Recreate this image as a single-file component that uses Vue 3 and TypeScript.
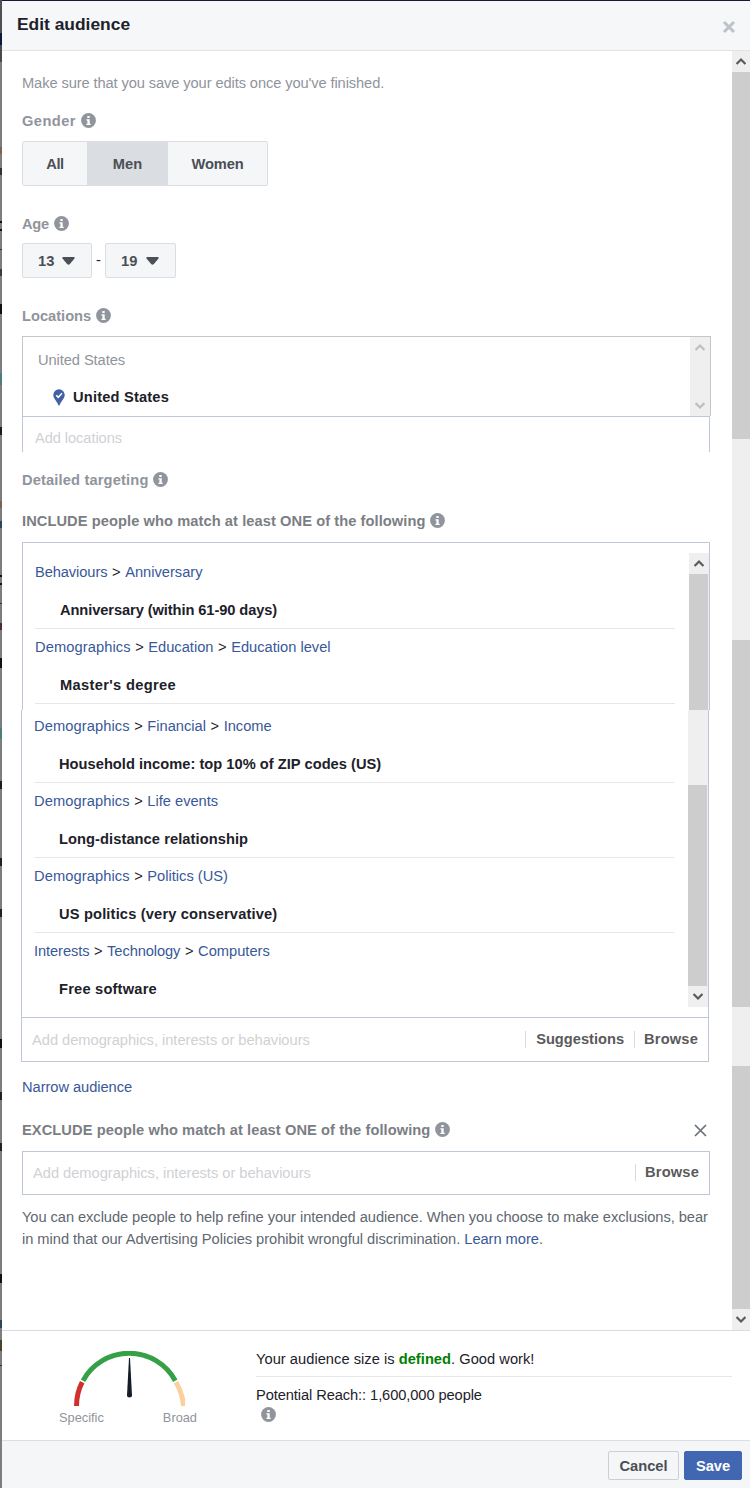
<script setup lang="ts">
import { ref } from 'vue'

interface Target {
  path: string[]
  name: string
  tracking: number
}

const genders: string[] = ['All', 'Men', 'Women']
const gender = ref('Men')
const ages: number[] = [13, 19]

const upperTargets: Target[] = [
  { path: ['Behaviours', 'Anniversary'], name: 'Anniversary (within 61-90 days)', tracking: -0.09 },
  { path: ['Demographics', 'Education', 'Education level'], name: "Master's degree", tracking: 0.33 },
]
const lowerTargets: Target[] = [
  { path: ['Demographics', 'Financial', 'Income'], name: 'Household income: top 10% of ZIP codes (US)', tracking: 0.02 },
  { path: ['Demographics', 'Life events'], name: 'Long-distance relationship', tracking: 0.07 },
  { path: ['Demographics', 'Politics (US)'], name: 'US politics (very conservative)', tracking: 0.16 },
  { path: ['Interests', 'Technology', 'Computers'], name: 'Free software', tracking: 0.2 },
]

const tightWords = ['Behaviours', 'Interests', 'Technology']
const wordClass = (word: string) => ({ tight: tightWords.includes(word), loose: word === 'Demographics' })
</script>

<template>
  <div class="page">
    <svg class="defs" width="0" height="0" aria-hidden="true">
      <symbol id="info" viewBox="0 0 15 15">
        <circle cx="7.5" cy="7.5" r="7.4" fill="#90949c" />
        <path d="M6.3 3h2.400v2H6.300zM5.400 6.200h3.300v4.600h1V12H5.400v-1.200h1V7.400h-1z" fill="#fff" />
      </symbol>
      <symbol id="up" viewBox="0 0 10 7">
        <path d="M.6 6 5 1.600 9.400 6" fill="none" stroke="currentColor" stroke-width="2.100" />
      </symbol>
      <symbol id="down" viewBox="0 0 10 7">
        <path d="M.6 1 5 5.400 9.400 1" fill="none" stroke="currentColor" stroke-width="2.100" />
      </symbol>
    </svg>
    <div class="backdrop"></div>
    <section class="dialog">
      <header class="head">
        <h1>Edit audience</h1>
        <svg class="close" width="14" height="14" viewBox="0 0 14 14"><path d="M2 2l10 10M12 2 2 12" stroke="#bec3c9" stroke-width="3" /></svg>
      </header>
      <main class="body">
        <div class="content">
          <p class="intro">Make sure that you save your edits once you've finished.</p>

          <h2 class="label gender-label"><span>Gender</span><svg class="info"><use href="#info" /></svg></h2>
          <div class="segments">
            <button v-for="g in genders" :key="g" :class="['segment', g.toLowerCase(), { on: g === gender }]" @click="gender = g">{{ g }}</button>
          </div>

          <h2 class="label age-label"><span>Age</span><svg class="info"><use href="#info" /></svg></h2>
          <div class="ages">
            <template v-for="(age, i) in ages" :key="age">
              <span v-if="i" class="dash">-</span>
              <button :class="['age', { wide: i === 1 }]">
                <span>{{ age }}</span>
                <svg width="13" height="8" viewBox="0 0 13 8"><path d="M1.200 0h10.600q1.500.4.5 1.700L7.900 7q-1.400 1.400-2.800 0L.7 1.700Q-.3.4 1.200 0z" fill="#4b4f56" /></svg>
              </button>
            </template>
          </div>

          <h2 class="label loc-label"><span>Locations</span><svg class="info"><use href="#info" /></svg></h2>
          <div class="loc-list">
            <div class="loc-items">
              <p class="loc-country">United States</p>
              <p class="loc-item">
                <svg width="12" height="17" viewBox="0 0 12 17"><path d="M6 .3a5.700 5.700 0 0 1 5.700 5.800C11.700 9.500 8.600 11.500 6.700 16q-.7 1-1.400 0C3.400 11.500.3 9.500.3 6.100A5.700 5.700 0 0 1 6 .3z" fill="#4260a5" /><path d="M3.200 6.200 5.200 8.300 9 4.300" fill="none" stroke="#fff" stroke-width="1.500" /></svg>
                <b>United States</b>
              </p>
            </div>
            <div class="mini-scroll"><svg><use href="#up" /></svg><svg><use href="#down" /></svg></div>
          </div>
          <div class="loc-input">Add locations</div>

          <h2 class="label detail-label"><span>Detailed targeting</span><svg class="info"><use href="#info" /></svg></h2>
          <h2 class="label dark include-label"><span>INCLUDE people who match at least ONE of the following</span><svg class="info"><use href="#info" /></svg></h2>

          <div class="targets upper">
            <ul>
              <li v-for="t in upperTargets" :key="t.name">
                <p class="path"><template v-for="(p, i) in t.path" :key="p"><i v-if="i"> &gt; </i><a :class="wordClass(p)">{{ p }}</a></template></p>
                <p class="name" :style="{ letterSpacing: t.tracking + 'px' }">{{ t.name }}</p>
              </li>
            </ul>
            <div class="list-scroll"><span class="btn"><svg><use href="#up" /></svg></span><span class="thumb"></span></div>
          </div>
          <div class="targets lower">
            <ul>
              <li v-for="t in lowerTargets" :key="t.name">
                <p class="path"><template v-for="(p, i) in t.path" :key="p"><i v-if="i"> &gt; </i><a :class="wordClass(p)">{{ p }}</a></template></p>
                <p class="name" :style="{ letterSpacing: t.tracking + 'px' }">{{ t.name }}</p>
              </li>
            </ul>
            <div class="list-scroll"><span class="thumb"></span><span class="btn"><svg><use href="#down" /></svg></span></div>
          </div>
          <div class="entry include-entry">
            <span class="hint">Add demographics, interests or behaviours</span>
            <span class="action">Suggestions</span><span class="action browse">Browse</span>
          </div>

          <p class="narrow"><a>Narrow audience</a></p>

          <div class="exclude-row">
            <h2 class="label dark"><span>EXCLUDE people who match at least ONE of the following</span><svg class="info"><use href="#info" /></svg></h2>
            <svg class="remove" width="13" height="13" viewBox="0 0 13 13"><path d="M1 1l11 11M12 1 1 12" stroke="#6a6f78" stroke-width="1.700" /></svg>
          </div>
          <div class="entry exclude-entry">
            <span class="hint">Add demographics, interests or behaviours</span>
            <span class="action browse">Browse</span>
          </div>
          <p class="note">You can exclude people to help refine your intended audience. When you choose to make exclusions, bear<br /><span class="second">in mind that our Advertising Policies prohibit wrongful discrimination. <a>Learn more</a>.</span></p>
        </div>
        <div class="main-scroll">
          <span class="btn"><svg><use href="#up" /></svg></span>
          <span class="thumb a"></span><span class="thumb b"></span><span class="thumb c"></span>
          <span class="btn"><svg><use href="#down" /></svg></span>
        </div>
      </main>
      <section class="summary">
        <div class="gauge">
          <svg width="112" height="56" viewBox="0 0 112 56" fill="none" stroke-width="5">
            <path d="M3.500 55A52.500 52.500 0 0 1 9.200 31.200" stroke="#d0312f" />
            <path d="M10 29.700A52.500 52.500 0 0 1 102.300 29.700" stroke="#35a046" />
            <path d="M103 31.200A52.500 52.500 0 0 1 110.500 55" stroke="#fccf9b" />
            <path d="M56 7h1l2 37.500q0 2-2.500 2T54 44.500z" fill="#141c28" />
          </svg>
          <div class="ends"><span>Specific</span><span>Broad</span></div>
        </div>
        <div class="facts">
          <p class="size">Your audience size is <b>defined</b>. Good work!</p>
          <p class="reach">Potential Reach:: 1,600,000 people</p>
          <svg class="info"><use href="#info" /></svg>
        </div>
      </section>
      <footer class="foot">
        <button class="cancel">Cancel</button>
        <button class="save">Save</button>
      </footer>
    </section>
  </div>
</template>

<style>
body { margin: 0; background: #fff; }
</style>

<style scoped>
.page { display: flex; width: 750px; height: 1488px; overflow: hidden; font-family: "Liberation Sans", Arial, sans-serif; font-size: 14.67px; line-height: 20px; color: #1d2129; }
.page * { box-sizing: border-box; }
.defs { position: absolute; }
h1, h2, p, ul { margin: 0; padding: 0; list-style: none; }
p, span { white-space: nowrap; }
button { font: inherit; font-weight: bold; color: #4b4f56; padding: 0; margin: 0; }
a { color: #385898; text-decoration: none; }
i { font-style: normal; white-space: pre; margin: 0 .5px; }
.tight { letter-spacing: -.09px; }
.loose { letter-spacing: .09px; }

.backdrop {
  width: 2px; flex: none;
  background: linear-gradient(#505050 0 33px, #0d1a38 33px 45px, #4a4a4a 45px 62px, #7d7d7d 62px 147px, #7d6450 147px 154px, #7d7d7d 154px 168px, #30333a 168px 175px,
    #7d7d7d 175px 221px, #111 221px 223px, #7d7d7d 223px 229px, #111 229px 231px, #7d7d7d 231px 249px, #26324d 249px 250px, #7d7d7d 250px 269px, #45392f 269px 276px,
    #7d7d7d 276px 304px, #111 304px 314px, #7d7d7d 314px 373px, #4a7f7c 373px 385px, #7d7d7d 385px 427px, #151d25 427px 435px,
    #7d7d7d 435px 501px, #7d6450 501px 508px, #7d7d7d 508px 521px, #30435c 521px 528px, #7d7d7d 528px 575px, #111 575px 577px, #7d7d7d 577px 583px, #111 583px 585px,
    #7d7d7d 585px 603px, #26324d 603px 604px, #7d7d7d 604px 623px, #45302f 623px 630px, #7d7d7d 630px 658px, #111 658px 668px, #7d7d7d 668px 728px, #4a7f7c 728px 739px,
    #7d7d7d 739px 781px, #151d25 781px 789px, #7d7d7d 789px 858px, #222 858px 866px, #7d7d7d 866px 909px, #222 909px 917px, #7d7d7d 917px 1039px, #111 1039px 1048px,
    #7d7d7d 1048px 1092px, #222 1092px 1100px, #7d7d7d 1100px 1143px, #222 1143px 1151px, #7d7d7d 1151px 1274px, #111 1274px 1283px,
    #7d7d7d 1283px 1320px, #30435c 1320px 1328px, #7d7d7d 1328px 1340px, #4d402d 1340px 1351px, #7d7d7d 1351px 1365px, #26324d 1365px 1366px, #7d7d7d 1366px);
}
.dialog { flex: 1; min-width: 0; border-top: 1px solid #141a38; background: #fff; display: flex; flex-direction: column; }
.head { height: 50px; background: #f6f7f9; border-bottom: 1px solid #e2e3e5; display: flex; align-items: center; justify-content: space-between; padding: 0 14px 0 15px; }
h1 { font-size: 17.4px; line-height: 20px; margin-top: -3px; }
.close { margin-top: 3px; }
.body { display: flex; height: 1279px; }
.content { width: 730px; padding: 22px 0 0 20px; }
.intro { color: #90949c; letter-spacing: -.1px; }

.label { display: flex; align-items: flex-start; gap: 5px; font-size: 14.67px; line-height: 20px; color: #90949c; }
.label.dark { color: #7b7e84; letter-spacing: .068px; }
.info { width: 15px; height: 15px; flex: none; }
.label .info { margin-top: 2px; }
.gender-label { margin-top: 18px; letter-spacing: .42px; }
.segments { display: flex; width: 246px; height: 45px; margin-top: 10px; border: 1px solid #dadde1; border-radius: 2px; overflow: hidden; }
.segment { border: 0; background: #f5f6f7; }
.segment.on { background: #dadde2; }
.all { width: 64px; letter-spacing: -.4px; }
.men { width: 81px; }
.women { width: 99px; letter-spacing: -.15px; }
.age-label { margin-top: 28px; letter-spacing: -.3px; }
.ages { display: flex; margin-top: 9px; height: 35px; }
.age { width: 70px; border: 1px solid #dadde1; border-radius: 2px; background: #f5f6f7; display: flex; align-items: center; padding-left: 15px; gap: 8px; }
.age.wide { width: 71px; gap: 9px; }
.dash { width: 13px; text-align: center; line-height: 35px; }

.loc-label { margin-top: 28px; }
.loc-list { width: 689px; height: 80px; margin-top: 10px; border: 1px solid #c6c6c6; border-bottom: 0; display: flex; justify-content: space-between; }
.loc-country { margin: 13px 0 0 15px; color: #90949c; letter-spacing: -.08px; }
.loc-item { margin: 17px 0 0 30px; display: flex; align-items: center; gap: 8px; letter-spacing: .18px; }
.mini-scroll { width: 20px; background: #efefef; color: #bebebe; display: flex; flex-direction: column; align-items: center; justify-content: space-between; padding: 7px 1px 7px 0; }
.mini-scroll svg, .btn svg { width: 10px; height: 7px; }
.loc-input { width: 688px; height: 36px; border: 1px solid #bdc7d8; border-bottom: 0; padding: 11px 0 0 12px; color: #cfd1d5; letter-spacing: -.08px; }

.detail-label { margin-top: 18px; letter-spacing: .15px; }
.include-label { margin-top: 21px; }
.targets { display: flex; justify-content: space-between; width: 688px; border: 1px solid #bdc7d8; border-width: 0 1px; }
.targets.upper { height: 168px; margin-top: 11px; border-top-width: 1px; }
.targets.lower { height: 307px; margin-left: -1px; }
.targets ul { width: 640px; margin-left: 12px; }
.upper ul { padding-top: 11px; }
.lower ul { margin-top: -2px; }
.targets li { height: 75px; padding-top: 8px; border-bottom: 1px solid #e6e7e9; }
.lower li:last-child { border-bottom: 0; }
.name { margin: 18px 0 0 25px; font-weight: bold; }
.list-scroll { width: 20px; background: #efefef; display: flex; flex-direction: column; }
.list-scroll .btn { padding-right: 1px; }
.upper .list-scroll { margin-top: 10px; }
.lower .list-scroll { height: 297px; }
.btn { flex: none; height: 21px; display: flex; align-items: center; justify-content: center; background: #efefef; color: #5a5a5a; }
.list-scroll .thumb { width: 19px; background: #cdcdcd; }
.upper .thumb { height: 136px; }
.lower .thumb { margin-top: 75px; height: 201px; }

.entry { display: flex; align-items: center; width: 688px; border: 1px solid #bdc7d8; padding-right: 10px; }
.hint { color: #cfd1d5; margin-right: auto; letter-spacing: -.02px; }
.action { font-weight: bold; color: #5a5a5c; border-left: 1px solid #dadada; line-height: 17px; margin-top: -1px; }
.browse { letter-spacing: .16px; }
.include-entry { height: 45px; margin-left: -1px; padding-left: 10px; }
.include-entry .action { padding-left: 10px; margin-left: 10px; }
.include-entry .action.browse { padding-left: 9px; }
.exclude-entry { height: 44px; margin-top: 11px; padding-left: 10px; }
.exclude-entry .action { padding-left: 9px; }
.narrow { margin-top: 15px; letter-spacing: -.05px; }
.exclude-row { width: 685px; margin-top: 23px; display: flex; align-items: center; justify-content: space-between; }
.note { margin-top: 11px; line-height: 22px; color: #606770; letter-spacing: -.061px; }
.second { letter-spacing: -.035px; }

.main-scroll { width: 18px; background: #efefef; display: flex; flex-direction: column; }
.main-scroll .thumb { background: #cdcdcd; }
.a { height: 367px; }
.b { margin-top: 201px; height: 367px; }
.c { margin-top: 59px; height: 243px; }

.summary { height: 110px; border-top: 1px solid #d9dbdd; display: flex; }
.gauge { width: 254px; padding: 20px 0 0 71px; }
.gauge svg { display: block; }
.ends { display: flex; justify-content: space-between; width: 138px; margin: 1px 0 0 -14px; font-size: 12.8px; color: #90949c; }
.facts { width: 476px; }
.size { height: 46px; padding-top: 18px; border-bottom: 1px solid #e5e6e8; letter-spacing: .03px; }
.size b { color: #008000; }
.reach { margin-top: 8px; letter-spacing: -.09px; }
.facts .info { display: block; margin: 2px 0 0 5px; }
.foot { flex: 1; border-top: 1px solid #dadde1; background: #f5f6f7; display: flex; gap: 5px; padding: 10px 8px 0 0; justify-content: flex-end; }
.foot button { height: 29px; border-radius: 2px; }
.cancel { width: 71px; border: 1px solid #ccd0d5; background: #f5f6f7; }
.foot .save { width: 58px; border: 1px solid #4267b2; background: #4267b2; color: #fff; }
</style>
